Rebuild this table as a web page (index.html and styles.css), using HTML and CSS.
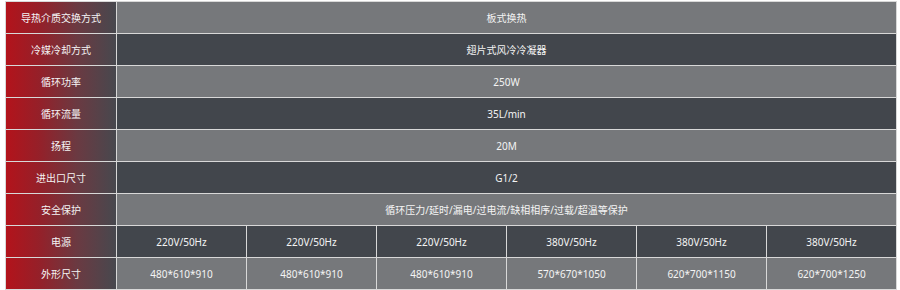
FILE: index.html
```html
<!DOCTYPE html>
<html lang="zh-CN">
<head>
<meta charset="utf-8">
<title>参数表</title>
<link rel="stylesheet" href="styles.css">
</head>
<body>
<div class="spec">
  <div class="label">导热介质交换方式</div><div class="val light full">板式换热</div>
  <div class="label">冷媒冷却方式</div><div class="val dark full">翅片式风冷冷凝器</div>
  <div class="label">循环功率</div><div class="val light full">250W</div>
  <div class="label">循环流量</div><div class="val dark full">35L/min</div>
  <div class="label">扬程</div><div class="val light full">20M</div>
  <div class="label">进出口尺寸</div><div class="val dark full">G1/2</div>
  <div class="label">安全保护</div><div class="val light full">循环压力/延时/漏电/过电流/缺相相序/过载/超温等保护</div>
  <div class="label">电源</div>
  <div class="val dark">220V/50Hz</div><div class="val dark">220V/50Hz</div><div class="val dark">220V/50Hz</div>
  <div class="val dark">380V/50Hz</div><div class="val dark">380V/50Hz</div><div class="val dark">380V/50Hz</div>
  <div class="label">外形尺寸</div>
  <div class="val light">480*610*910</div><div class="val light">480*610*910</div><div class="val light">480*610*910</div>
  <div class="val light">570*670*1050</div><div class="val light">620*700*1150</div><div class="val light">620*700*1250</div>
</div>
</body>
</html>
```

FILE: styles.css
```css
html, body {
  margin: 0;
  padding: 0;
  background: #ffffff;
}
body {
  padding: 1px 0 0 5px;
  font-family: "Noto Sans", "Noto Sans CJK SC", sans-serif;
}
.spec {
  display: grid;
  grid-template-columns: 110px repeat(6, 129px);
  grid-auto-rows: 31px;
  gap: 1px;
  padding: 1px;
  background: #d8d8d8;
  width: max-content;
}
.label, .val {
  display: flex;
  align-items: center;
  justify-content: center;
  color: #f4f4f4;
  font-size: 10px;
  white-space: nowrap;
}
.label {
  background: linear-gradient(90deg, #b3131b 0%, #952029 30%, #6a3a42 65%, #47484e 100%);
}
.full {
  grid-column: span 6;
}
.light {
  background: #76787b;
}
.dark {
  background: #42464c;
}
```
